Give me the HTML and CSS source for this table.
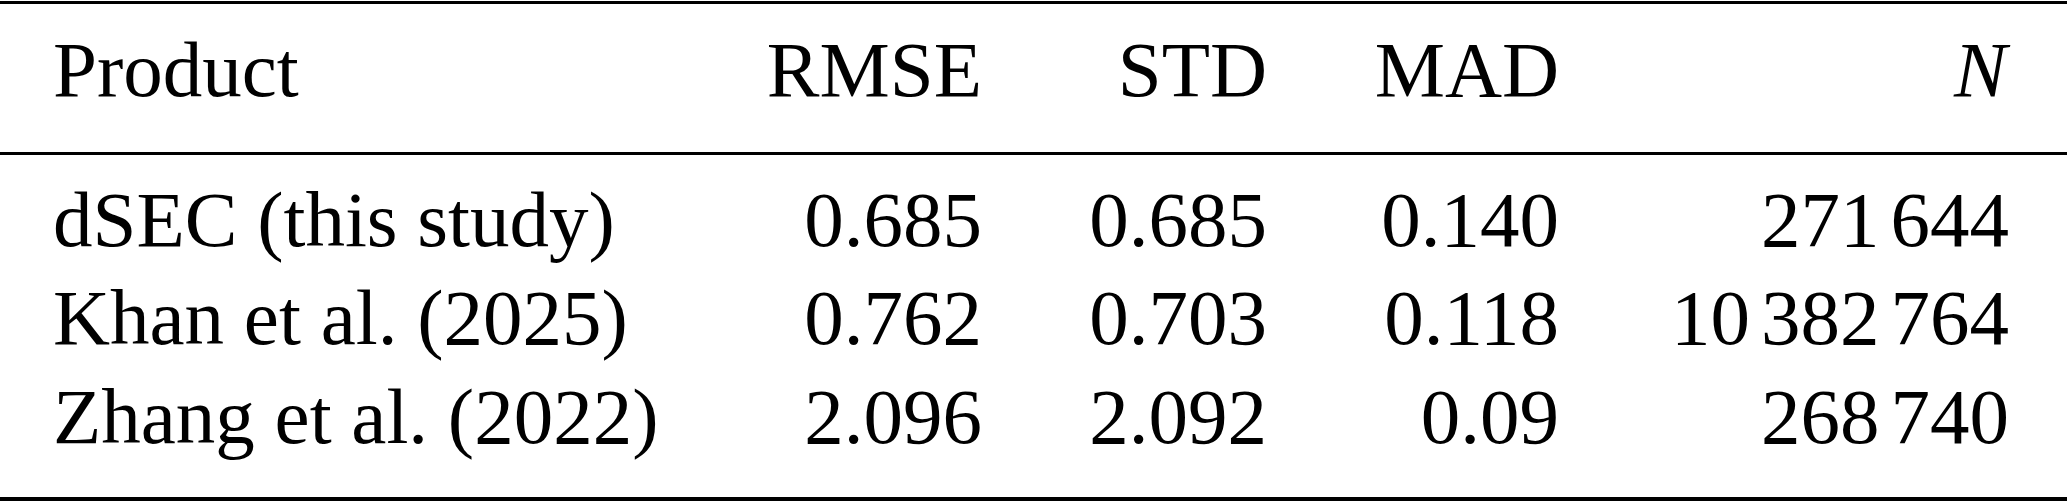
FILE: index.html
```html
<!DOCTYPE html>
<html lang="en">
<head>
<meta charset="utf-8">
<title>Product comparison</title>
<link rel="stylesheet" href="styles.css">
</head>
<body>
<div class="tbl">
  <div class="row head">
    <div class="c name">Product</div>
    <div class="c num">RMSE</div>
    <div class="c num">STD</div>
    <div class="c num">MAD</div>
    <div class="c num"><span class="var">N</span></div>
  </div>
  <div class="body">
    <div class="row">
      <div class="c name">dSEC (this study)</div>
      <div class="c num">0.685</div>
      <div class="c num">0.685</div>
      <div class="c num">0.140</div>
      <div class="c num">271<span class="ts"></span>644</div>
    </div>
    <div class="row">
      <div class="c name">Khan et al. (2025)</div>
      <div class="c num">0.762</div>
      <div class="c num">0.703</div>
      <div class="c num">0.118</div>
      <div class="c num">10<span class="ts"></span>382<span class="ts"></span>764</div>
    </div>
    <div class="row">
      <div class="c name">Zhang et al. (2022)</div>
      <div class="c num">2.096</div>
      <div class="c num">2.092</div>
      <div class="c num">0.09</div>
      <div class="c num">268<span class="ts"></span>740</div>
    </div>
  </div>
</div>
</body>
</html>
```

FILE: styles.css
```css
html, body {
  margin: 0;
  padding: 0;
  background: #ffffff;
}

body {
  font-family: "Liberation Serif", "Times New Roman", serif;
  font-size: 79px;
  color: #000000;
}

.tbl {
  width: 2067px;
  height: 501px;
  box-sizing: border-box;
  padding-top: 1px;
}

.row {
  display: grid;
  grid-template-columns: 647px 282px 285px 292px 450px;
  padding: 0 58px 0 53px;
  line-height: 98.2px;
  white-space: nowrap;
}

.head {
  border-top: 3px solid #000000;
  border-bottom: 3px solid #000000;
  padding-top: 17.2px;
  padding-bottom: 32.6px;
}

.body {
  padding-top: 16.2px;
  padding-bottom: 31.2px;
  border-bottom: 4px solid #000000;
}

.c.name {
  text-align: left;
}

.c.num {
  text-align: right;
}

.var {
  font-style: italic;
  padding-right: 0.03em;
}

.ts {
  display: inline-block;
  width: 11px;
}
```
